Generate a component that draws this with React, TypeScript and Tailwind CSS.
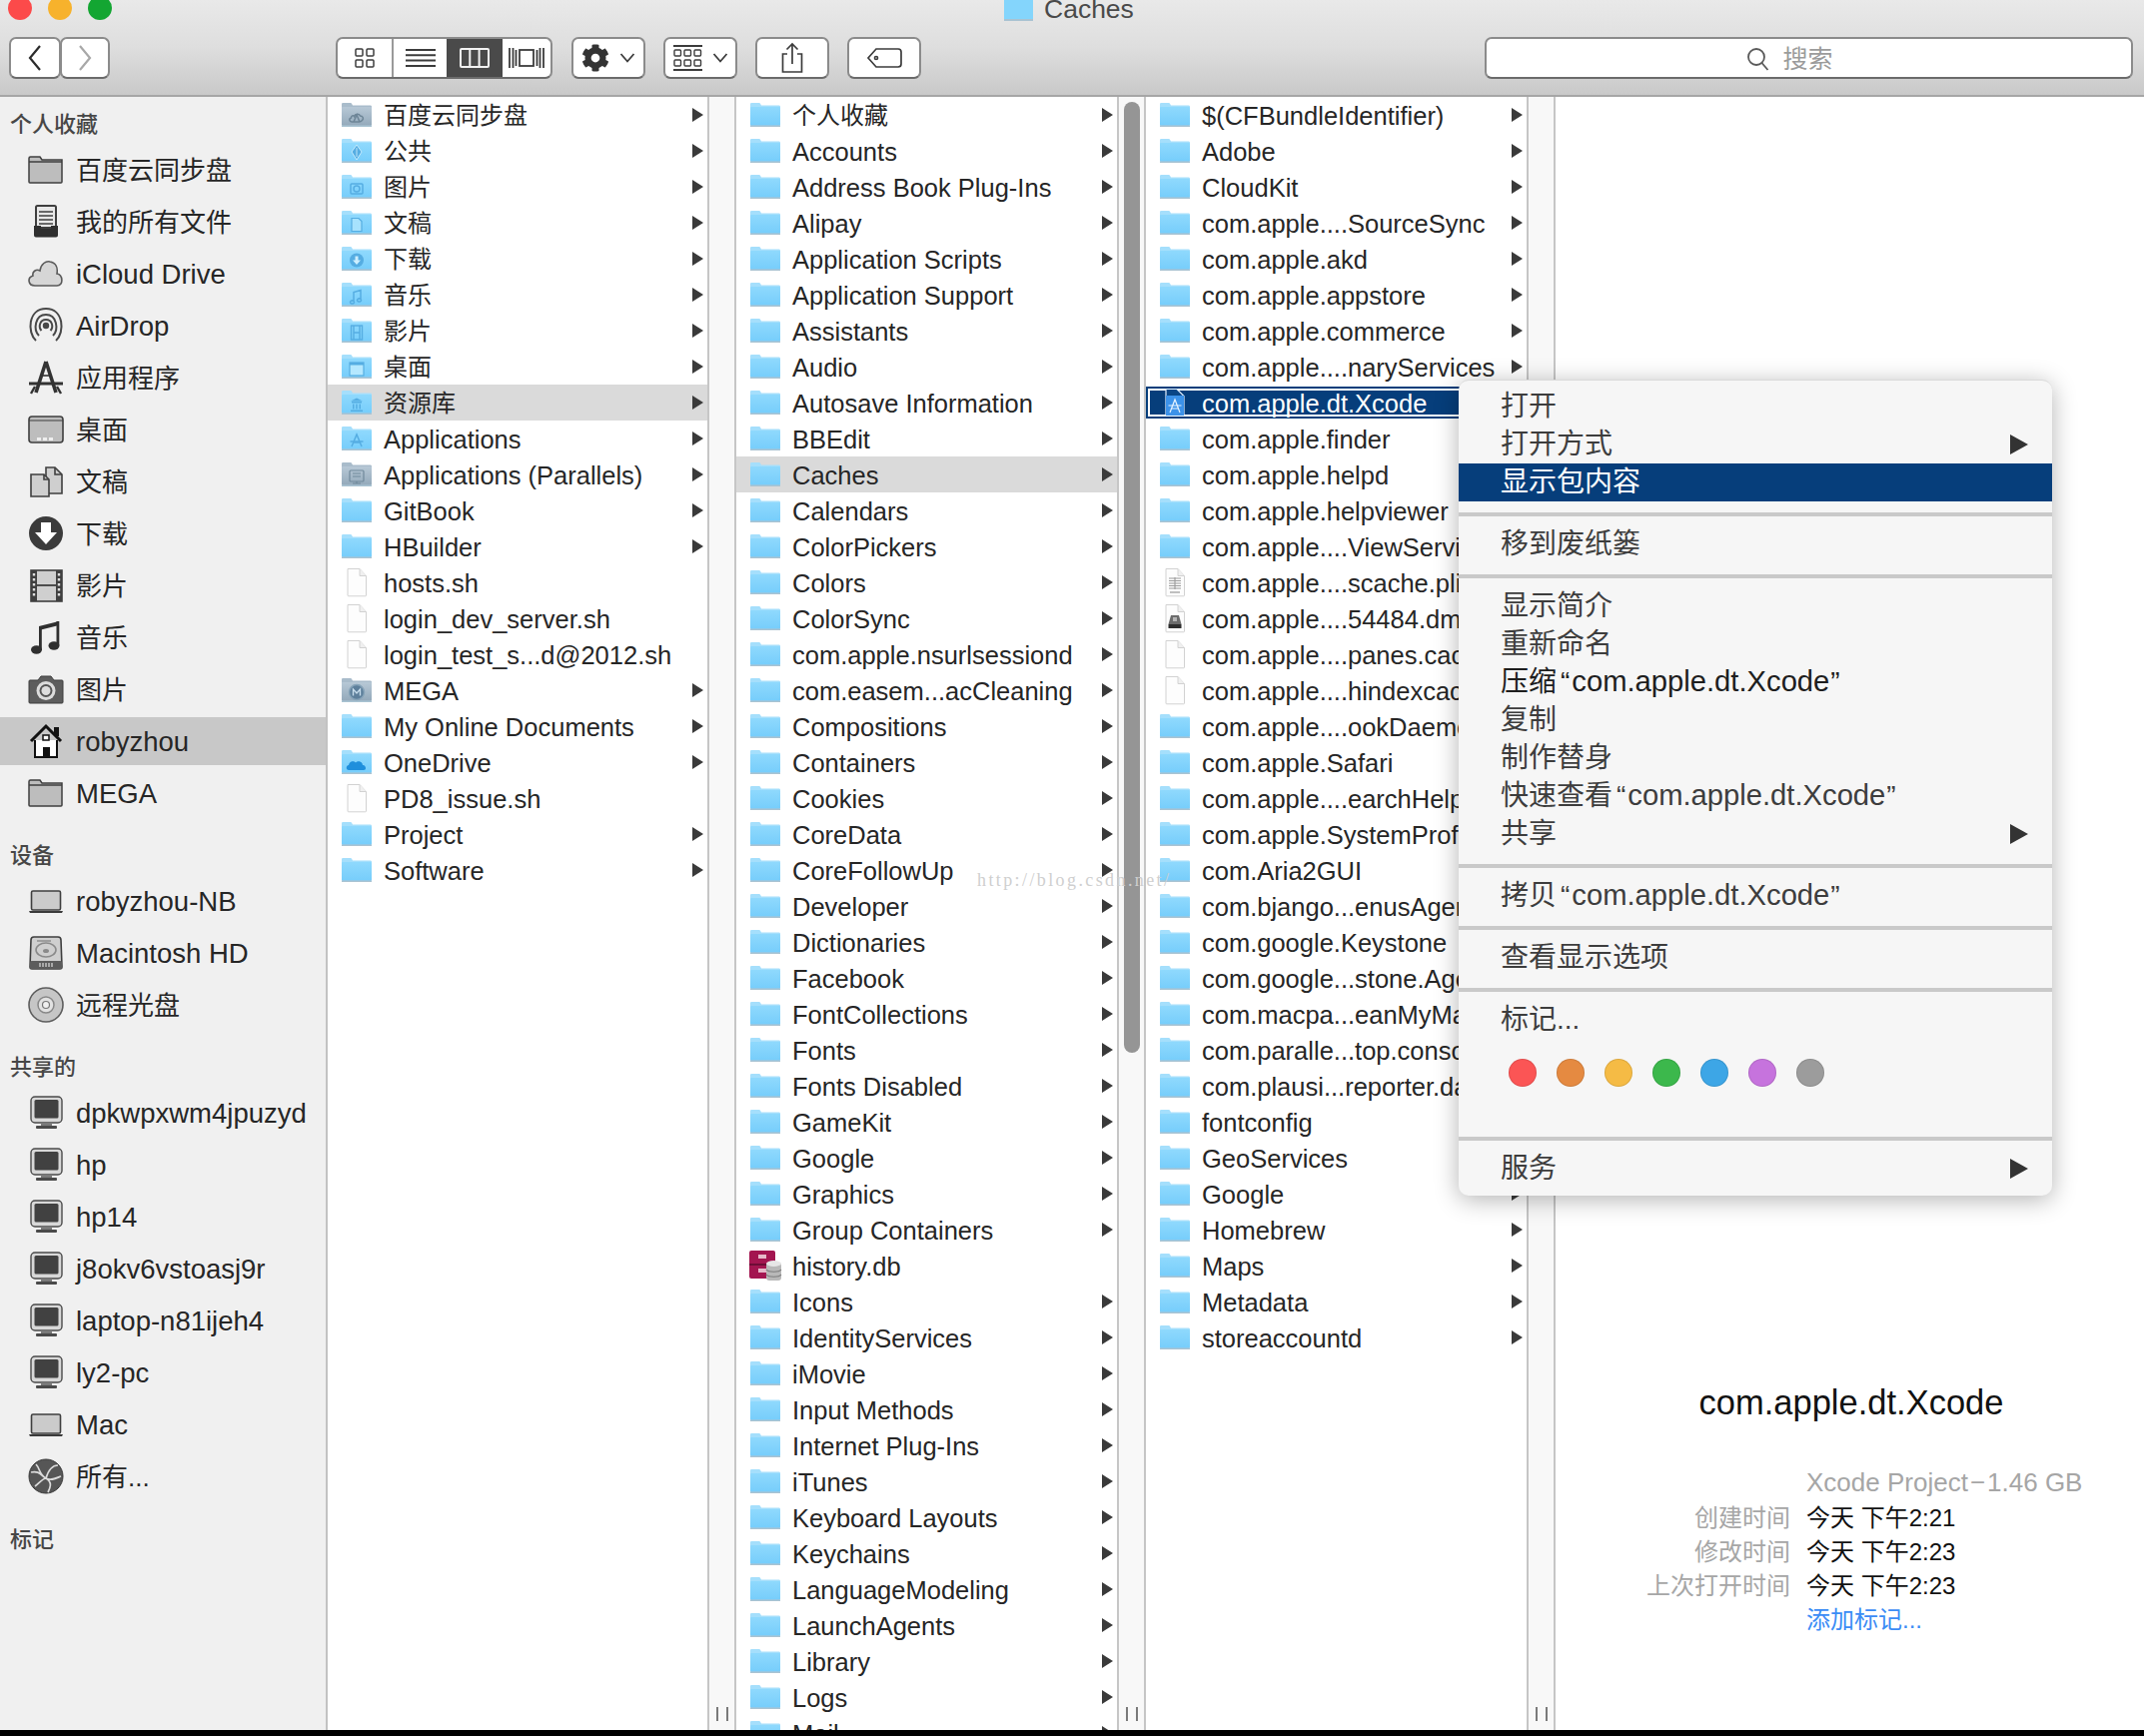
import React from "react";
import { FaCog } from "react-icons/fa";

const isCJK = (s: string) => /[\u4e00-\u9fff]/.test(s);

type Glyph = "cloud" | "star" | "camera" | "doc" | "down" | "music" | "film" | "desk" | "lib" | "app" | "par" | "mega" | "one" | "none";

function Folder({ glyph = "none", tone = "blue" }: { glyph?: Glyph; tone?: "blue" | "grey" }) {
  const back = tone === "grey" ? "#a9bccb" : "#a5dffc";
  const c1 = tone === "grey" ? "#b7c8d6" : "#8fd9fd";
  const c2 = tone === "grey" ? "#93a9ba" : "#76cdfb";
  const g = tone === "grey" ? "#6d8597" : "#55ade2";
  const id = tone === "grey" ? "fg" : "fb";
  return (
    <svg width="32" height="26" viewBox="0 0 32 26" className="shrink-0">
      <defs>
        <linearGradient id={id} x1="0" y1="0" x2="0" y2="1">
          <stop offset="0" stopColor={c1} />
          <stop offset="1" stopColor={c2} />
        </linearGradient>
      </defs>
      <path d="M1 7V2.5C1 1.4 1.6 1 2.5 1H9.5C10.6 1 11 1.6 12 3.5H29.5C30.5 3.5 31 4 31 5V8H1Z" fill={back} />
      <rect x="1" y="5" width="30" height="19" rx="1" fill={`url(#${id})`} />
      <rect x="1" y="23.4" width="30" height="1.6" fill="#a9c3d2" />
      {glyph === "cloud" && <path d="M11 20c-2.5 0-3-3.500-.5-4 0-2 2-3 3-1.500 1-3 5-3 6-.5 2.500 0 4 2.500 2 4.500-1 1-2 1.500-3 1.500zM13 20l3-7 3 7" fill="none" stroke={g} strokeWidth="1.500" />}
      {glyph === "star" && <path d="M16 7l5 7-5 8-5-8z M16 10v9" fill={g} stroke="#d6f2ff" strokeWidth="0.8" />}
      {glyph === "camera" && <g fill="none" stroke={g} strokeWidth="1.500"><rect x="10" y="10" width="12" height="10" rx="1" /><circle cx="16" cy="15" r="3" /></g>}
      {glyph === "doc" && <path d="M11 8.500h7l3 3v10h-10z" fill="#a7e2fd" stroke={g} strokeWidth="1.200" />}
      {glyph === "down" && <g><circle cx="16" cy="14.500" r="7" fill={g} /><path d="M14.500 10.500h3v4h2.500l-4 4.500-4-4.500h2.500z" fill="#cdefff" /></g>}
      {glyph === "music" && <path d="M13 19.500v-9l7-2v9M13 19.500a2 1.500 0 1 1-3 0 2 1.500 0 0 1 3 0zM20 17.500a2 1.500 0 1 1-3 0 2 1.500 0 0 1 3 0z" fill="none" stroke={g} strokeWidth="1.500" />}
      {glyph === "film" && <g fill="none" stroke={g} strokeWidth="1.400"><rect x="10.500" y="8" width="11" height="14" /><path d="M13 8v14M19 8v14M13 15h6" /></g>}
      {glyph === "desk" && <g><rect x="9" y="9" width="14" height="13" fill="#b5e8ff" stroke={g} strokeWidth="1.200" /><rect x="9" y="9" width="14" height="2.500" fill={g} /></g>}
      {glyph === "lib" && <path d="M10 20.500h12v1.500H10zM11 12h10v1.500H11zM16 8.500l6 3H10zM12 14.500h1.500v5H12zM15.200 14.500h1.500v5h-1.500zM18.500 14.500H20v5h-1.500z" fill={g} />}
      {glyph === "app" && <path d="M11 21l5-12 5 12M12 17h8M9.500 16h13" fill="none" stroke={g} strokeWidth="1.500" />}
      {glyph === "par" && <g fill="none" stroke="#70899b" strokeWidth="1.200"><rect x="9" y="9" width="14" height="11" rx="1" /><path d="M12 22h8M16 20v2M12 12h8M12 15h8" /></g>}
      {glyph === "mega" && <g><circle cx="16" cy="15" r="7.500" fill="#5d7f9b" stroke="#86a3b8" strokeWidth="1.500" /><path d="M12.500 18.500v-6.500l3.500 4 3.500-4v6.500" fill="none" stroke="#c6dbea" strokeWidth="1.400" /></g>}
      {glyph === "one" && <path d="M8 21c-3 0-3-4.500 0-5 .5-4 5-5 7-2.500 2.500-2.500 7-.5 7 2.500 3-.5 4.500 5 1 5z" fill="#1f8fdc" />}
    </svg>
  );
}

function FileIcon({ kind = "blank" }: { kind?: "blank" | "plist" | "dmg" }) {
  return (
    <svg width="24" height="30" viewBox="0 0 24 30" className="shrink-0">
      <path d="M3 1.500h12l6.500 7V28a.8.8 0 0 1-.8.8H3.800A.8.8 0 0 1 3 28z" fill="#fdfdfd" stroke="#d2d2d2" strokeWidth="1" />
      <path d="M15 1.500v7h6.500" fill="#f0f0f0" stroke="#d2d2d2" strokeWidth="1" />
      {kind === "plist" && (
        <g stroke="#9a9a9a" strokeWidth="1.100">
          <path d="M6 11h12M6 13.500h12M6 16h12M6 18.500h12M6 21h12M12 10v12" />
        </g>
      )}
      {kind === "plist" && <rect x="7" y="24" width="10" height="2" fill="#c0c0c0" />}
      {kind === "dmg" && (
        <g>
          <path d="M8 12h8l2.500 9h-13z" fill="#6c6c6c" />
          <rect x="5.500" y="21" width="13" height="4" fill="#2e2e2e" />
          <rect x="10" y="14" width="4" height="4" fill="#b5b5b5" />
        </g>
      )}
    </svg>
  );
}

function DbIcon() {
  return (
    <svg width="34" height="32" viewBox="0 0 34 32" className="shrink-0">
      <rect x="1" y="1" width="26" height="28" rx="2" fill="#a31550" />
      <rect x="1" y="14" width="26" height="2" fill="#6d0d36" />
      <rect x="10" y="5" width="8" height="4" fill="#e6b8c9" />
      <rect x="10" y="19" width="8" height="4" fill="#e6b8c9" />
      <rect x="18" y="13" width="15" height="18" rx="3" fill="#b8b8b8" />
      <ellipse cx="25.500" cy="14" rx="7.500" ry="3" fill="#e6e6e6" />
      <path d="M18 20c2 3 13 3 15 0M18 25c2 3 13 3 15 0" fill="none" stroke="#7d7d7d" strokeWidth="1.200" />
    </svg>
  );
}

function XcodeDoc() {
  return (
    <svg width="24" height="30" viewBox="0 0 24 30" className="shrink-0">
      <path d="M3 1.500h11l7 7V28H3z" fill="#0a4686" stroke="#e3f0ff" strokeWidth="1.200" />
      <rect x="3" y="8" width="18" height="20" fill="#3c92e9" />
      <path d="M7 25l5-13 5 13M8 21h8M5.500 18h13" fill="none" stroke="#e8f4ff" strokeWidth="1.200" />
    </svg>
  );
}

function Arrow({ className = "" }: { className?: string }) {
  return (
    <svg width="11" height="14" viewBox="0 0 11 14" className={`shrink-0 ${className}`}>
      <path d="M0 0L11 7L0 14Z" fill="#3a3a3a" />
    </svg>
  );
}

type Row = { t: string; g?: Glyph; tone?: "grey"; f?: "blank" | "plist" | "dmg" | "db" | "xcode"; noArrow?: boolean };

const col1: Row[] = [
  { t: "百度云同步盘", g: "cloud", tone: "grey" },
  { t: "公共", g: "star" },
  { t: "图片", g: "camera" },
  { t: "文稿", g: "doc" },
  { t: "下载", g: "down" },
  { t: "音乐", g: "music" },
  { t: "影片", g: "film" },
  { t: "桌面", g: "desk" },
  { t: "资源库", g: "lib" },
  { t: "Applications", g: "app" },
  { t: "Applications (Parallels)", g: "par", tone: "grey" },
  { t: "GitBook" },
  { t: "HBuilder" },
  { t: "hosts.sh", f: "blank", noArrow: true },
  { t: "login_dev_server.sh", f: "blank", noArrow: true },
  { t: "login_test_s...d@2012.sh", f: "blank", noArrow: true },
  { t: "MEGA", g: "mega", tone: "grey" },
  { t: "My Online Documents" },
  { t: "OneDrive", g: "one" },
  { t: "PD8_issue.sh", f: "blank", noArrow: true },
  { t: "Project" },
  { t: "Software" },
];

const col2: Row[] = [
  "个人收藏", "Accounts", "Address Book Plug-Ins", "Alipay", "Application Scripts", "Application Support", "Assistants", "Audio",
  "Autosave Information", "BBEdit", "Caches", "Calendars", "ColorPickers", "Colors", "ColorSync", "com.apple.nsurlsessiond",
  "com.easem...acCleaning", "Compositions", "Containers", "Cookies", "CoreData", "CoreFollowUp", "Developer", "Dictionaries",
  "Facebook", "FontCollections", "Fonts", "Fonts Disabled", "GameKit", "Google", "Graphics", "Group Containers", "history.db",
  "Icons", "IdentityServices", "iMovie", "Input Methods", "Internet Plug-Ins", "iTunes", "Keyboard Layouts", "Keychains",
  "LanguageModeling", "LaunchAgents", "Library", "Logs", "Mail",
].map((t): Row => (t === "history.db" ? { t, f: "db", noArrow: true } : { t }));

const col3: Row[] = [
  { t: "$(CFBundleIdentifier)" },
  { t: "Adobe" },
  { t: "CloudKit" },
  { t: "com.apple....SourceSync" },
  { t: "com.apple.akd" },
  { t: "com.apple.appstore" },
  { t: "com.apple.commerce" },
  { t: "com.apple....naryServices" },
  { t: "com.apple.dt.Xcode", f: "xcode" },
  { t: "com.apple.finder" },
  { t: "com.apple.helpd" },
  { t: "com.apple.helpviewer" },
  { t: "com.apple....ViewServices" },
  { t: "com.apple....scache.plist", f: "plist", noArrow: true },
  { t: "com.apple....54484.dmg", f: "dmg", noArrow: true },
  { t: "com.apple....panes.cache", f: "blank", noArrow: true },
  { t: "com.apple....hindexcache", f: "blank", noArrow: true },
  { t: "com.apple....ookDaemon" },
  { t: "com.apple.Safari" },
  { t: "com.apple....earchHelper" },
  { t: "com.apple.SystemProfiler" },
  { t: "com.Aria2GUI" },
  { t: "com.bjango...enusAgent" },
  { t: "com.google.Keystone" },
  { t: "com.google...stone.Agent" },
  { t: "com.macpa...eanMyMac" },
  { t: "com.paralle...top.console" },
  { t: "com.plausi...reporter.data" },
  { t: "fontconfig" },
  { t: "GeoServices" },
  { t: "Google" },
  { t: "Homebrew" },
  { t: "Maps" },
  { t: "Metadata" },
  { t: "storeaccountd" },
];

function RowIcon({ r }: { r: Row }) {
  if (r.f === "db") return <DbIcon />;
  if (r.f === "xcode") return <XcodeDoc />;
  if (r.f) return <FileIcon kind={r.f} />;
  return <Folder glyph={r.g} tone={r.tone ?? "blue"} />;
}

function ColumnRow({ r, selected }: { r: Row; selected?: "grey" | "navy" }) {
  const size = isCJK(r.t) ? "text-[24px]" : "text-[25.5px]";
  const navy = selected === "navy";
  const inner = (
    <>
      <div className={`w-[32px] flex justify-center items-center shrink-0 ${navy ? "ml-[9px]" : "ml-[13px]"}`}>
        <RowIcon r={r} />
      </div>
      <span className={`ml-[11px] pt-[2px] whitespace-nowrap ${size} ${navy ? "text-white" : "text-[#262626]"}`}>{r.t}</span>
      {!r.noArrow && <Arrow className="ml-auto mr-[4px]" />}
    </>
  );
  if (navy) {
    return (
      <div className="h-9 py-[2px] flex">
        <div className="flex-1 border-2 border-[#063e7b] bg-white p-[2px] flex">
          <div className="flex-1 flex items-center bg-[#063e7b]">{inner}</div>
        </div>
      </div>
    );
  }
  return <div className={`h-9 flex items-center ${selected === "grey" ? "bg-[#dadada]" : ""}`}>{inner}</div>;
}

function Gutter({ thumb, w }: { thumb?: boolean; w: string }) {
  return (
    <div className={`${w} shrink-0 bg-[#f8f8f8] border-x-2 border-[#c6c6c6] flex flex-col items-center`}>
      {thumb && <div className="w-[16px] h-[952px] mt-[5px] rounded-full bg-[#959595]" />}
      <div className="mt-auto mb-[9px] flex gap-[8px]">
        <div className="w-[2px] h-[14px] bg-[#7a7a7a]" />
        <div className="w-[2px] h-[14px] bg-[#7a7a7a]" />
      </div>
    </div>
  );
}

function Column({ rows, sel, selKind, w }: { rows: Row[]; sel: number; selKind: "grey" | "navy"; w: string }) {
  return (
    <div className={`${w} shrink-0 overflow-hidden bg-white`}>
      {rows.map((r, i) => (
        <ColumnRow key={r.t + i} r={r} selected={i === sel ? selKind : undefined} />
      ))}
    </div>
  );
}

type SK = "folder" | "files" | "cloud" | "airdrop" | "apps" | "desktop" | "docs" | "down" | "film" | "music" | "camera" | "home" | "laptop" | "hd" | "disc" | "monitor" | "globe";

function SIcon({ k }: { k: SK }) {
  const s = "#3f3f3f";
  return (
    <svg width="36" height="36" viewBox="0 0 36 36" className="shrink-0">
      {k === "folder" && (
        <g stroke={s} strokeWidth="1.500">
          <path d="M1 8V6.500C1 5.500 1.500 5 2.500 5H12l2 3h20v22a1 1 0 0 1-1 1H2a1 1 0 0 1-1-1z" fill="#bdbdbd" />
          <path d="M1 10h33" fill="none" />
        </g>
      )}
      {k === "files" && (
        <g>
          <path d="M8 3.500Q8 2 9.500 2h17Q28 2 28 3.500V24H8z" fill="#e8e8e8" stroke={s} strokeWidth="2" />
          <path d="M11 8h14M11 12h14M11 16h14M11 20h14" stroke={s} strokeWidth="1.600" />
          <path d="M6 22h7v3h10v-3h7v9.500q0 2-2 2H8q-2 0-2-2z" fill="#2f2f2f" />
        </g>
      )}
      {k === "cloud" && <path d="M7 30c-7 0-8-8-2-10-1-4 3-7 7-5 1-7 6-10 10-9 6 1 8 6 7 12 6 1 7 12 0 12z" fill="#d6d6d6" stroke="#5a5a5a" strokeWidth="1.600" />}
      {k === "airdrop" && (
        <g fill="none" stroke="#484848" strokeWidth="2">
          <path d="M8 33C-1 25 0 1 18 1s19 24 10 32" />
          <path d="M11 28C5 22 7 7 18 7s13 15 7 21" />
          <path d="M13.500 23C10 19 12 12 18 12s8 7 4.500 11" />
          <circle cx="18" cy="18" r="2.200" fill="#484848" />
        </g>
      )}
      {k === "apps" && (
        <g>
          <path d="M18 2L8 33M18 2l10 31" fill="none" stroke="#333" strokeWidth="3.600" />
          <path d="M1 24h34" stroke="#333" strokeWidth="3" />
          <path d="M12 16h12" stroke="#333" strokeWidth="1.600" />
          <path d="M3 34l4-7M33 34l-4-7" stroke="#333" strokeWidth="2.400" />
        </g>
      )}
      {k === "desktop" && (
        <g>
          <rect x="1" y="5" width="34" height="26" rx="3" fill="#bdbdbd" stroke={s} strokeWidth="1.600" />
          <path d="M1 9h34" stroke={s} strokeWidth="1.200" />
          <rect x="9" y="26" width="4" height="3" fill="#eee" />
          <rect x="15" y="26" width="4" height="3" fill="#eee" />
          <rect x="21" y="26" width="4" height="3" fill="#eee" />
        </g>
      )}
      {k === "docs" && (
        <g fill="#cfcfcf" stroke={s} strokeWidth="1.600">
          <path d="M18 4h9l7 7v19H18z" />
          <path d="M3 11h13l5 5v17H3z" />
          <path d="M16 11v5h5M27 4v7h7" fill="none" />
        </g>
      )}
      {k === "down" && (
        <g>
          <circle cx="18" cy="18" r="17" fill="#3b3b3b" />
          <path d="M13 7h10v10h6L18 29 7 17h6z" fill="#fff" />
        </g>
      )}
      {k === "film" && (
        <g>
          <rect x="3" y="3" width="31" height="31" fill="#cfcfcf" stroke={s} strokeWidth="1.600" />
          <rect x="3" y="3" width="6" height="31" fill={s} />
          <rect x="28" y="3" width="6" height="31" fill={s} />
          <path d="M9 18h19" stroke={s} strokeWidth="1.800" />
          <path d="M6 6v25M31 6v25" stroke="#ddd" strokeWidth="2.400" strokeDasharray="2.500 2.500" />
        </g>
      )}
      {k === "music" && (
        <g fill="#2f2f2f">
          <path d="M11 7L31 2v4L11 11z" />
          <rect x="11" y="7" width="2.800" height="24" />
          <rect x="28.500" y="2" width="2.800" height="24" />
          <ellipse cx="8.500" cy="30.500" rx="5.500" ry="4.200" />
          <ellipse cx="26" cy="26.500" rx="5.500" ry="4.200" />
        </g>
      )}
      {k === "camera" && (
        <g>
          <path d="M2 9h8l3-4h10l3 4h8a1 1 0 0 1 1 1v21a1 1 0 0 1-1 1H2a1 1 0 0 1-1-1V10a1 1 0 0 1 1-1z" fill="#5d5d5d" stroke={s} strokeWidth="1" />
          <circle cx="18" cy="19.500" r="9.500" fill="#dcdcdc" />
          <circle cx="18" cy="19.500" r="6.500" fill="#555" />
          <circle cx="18" cy="19.500" r="4.500" fill="#ddd" />
        </g>
      )}
      {k === "home" && (
        <g>
          <path d="M3 18L18 3l15 15" fill="none" stroke="#111" strokeWidth="3" />
          <rect x="26" y="4" width="5" height="9" fill="#111" />
          <path d="M7 17v17h22V17" fill="#fff" stroke="#111" strokeWidth="2" />
          <rect x="15" y="12" width="6" height="5" fill="#fff" stroke="#111" strokeWidth="1.500" />
          <rect x="15" y="24" width="7" height="10" fill="#111" />
        </g>
      )}
      {k === "laptop" && (
        <g>
          <rect x="3.500" y="8" width="29" height="19" rx="1.500" fill="#cbcbcb" stroke={s} strokeWidth="1.600" />
          <path d="M1 28h34l-1 2H2z" fill="#3a3a3a" />
        </g>
      )}
      {k === "hd" && (
        <g>
          <path d="M6 2h24q3 0 3 3l1 27q0 2-2 2H4q-2 0-2-2L3 5q0-3 3-3z" fill="#cfcfcf" stroke={s} strokeWidth="1.600" />
          <rect x="2" y="26" width="32" height="8" rx="1.500" fill="#5c5c5c" />
          <path d="M12 28v4M15 28v4M18 28v4M21 28v4M24 28v4" stroke="#ddd" strokeWidth="1.200" />
          <ellipse cx="18" cy="15" rx="10" ry="7" fill="none" stroke="#8a8a8a" strokeWidth="1.600" />
          <ellipse cx="18" cy="16" rx="3" ry="2" fill="#8a8a8a" />
          <path d="M9 6h14" stroke="#8a8a8a" strokeWidth="1.400" />
        </g>
      )}
      {k === "disc" && (
        <g>
          <circle cx="18" cy="18" r="17" fill="#c6c6c6" stroke="#5d5d5d" strokeWidth="1.600" />
          <circle cx="18" cy="18" r="8" fill="#e2e2e2" stroke="#888" strokeWidth="1.500" />
          <circle cx="18" cy="18" r="3.500" fill="#f0f0f0" stroke="#777" strokeWidth="1.200" />
        </g>
      )}
      {k === "monitor" && (
        <g>
          <rect x="3" y="2" width="31" height="26" rx="4" fill="#d8d8d8" stroke="#4a4a4a" strokeWidth="1.400" />
          <rect x="6.500" y="5" width="24" height="18.500" rx="1.500" fill="#414141" />
          <rect x="13" y="28" width="11" height="3" fill="#7a7a7a" />
          <rect x="8" y="31" width="21" height="3" rx="1" fill="#4a4a4a" />
        </g>
      )}
      {k === "globe" && (
        <g>
          <circle cx="18" cy="18" r="17" fill="#565656" stroke="#3a3a3a" />
          <path d="M3 14c8-2 10 3 15 6s10 0 15-2M8 6c4 4 3 10 10 14s4 10 2 14M30 7c-5 0-9 3-12 13M7 28c4-3 8-8 11-8" fill="none" stroke="#dcdcdc" strokeWidth="1.700" />
        </g>
      )}
    </svg>
  );
}

function SideRow({ k, t, active }: { k: SK; t: string; active?: boolean }) {
  return (
    <div className="h-[52px] flex items-center">
      <div className={`h-12 w-full flex items-center ${active ? "bg-[#c8c8c8]" : ""}`}>
        <div className="ml-[28px] w-[36px] flex justify-center shrink-0">
          <SIcon k={k} />
        </div>
        <span className={`ml-[12px] pt-[2px] whitespace-nowrap text-[#262626] ${isCJK(t) ? "text-[26px]" : "text-[27.5px]"}`}>{t}</span>
      </div>
    </div>
  );
}

function SideHead({ t, first, mt20 }: { t: string; first?: boolean; mt20?: boolean }) {
  return (
    <div className={`h-8 mb-[5px] pl-[10px] pt-[2px] flex items-center text-[22px] font-medium text-[#474747] ${first ? "" : mt20 ? "mt-5" : "mt-[19px]"}`}>{t}</div>
  );
}

function Sidebar() {
  const fav: [SK, string][] = [
    ["folder", "百度云同步盘"],
    ["files", "我的所有文件"],
    ["cloud", "iCloud Drive"],
    ["airdrop", "AirDrop"],
    ["apps", "应用程序"],
    ["desktop", "桌面"],
    ["docs", "文稿"],
    ["down", "下载"],
    ["film", "影片"],
    ["music", "音乐"],
    ["camera", "图片"],
    ["home", "robyzhou"],
    ["folder", "MEGA"],
  ];
  const dev: [SK, string][] = [
    ["laptop", "robyzhou-NB"],
    ["hd", "Macintosh HD"],
    ["disc", "远程光盘"],
  ];
  const share: [SK, string][] = [
    ["monitor", "dpkwpxwm4jpuzyd"],
    ["monitor", "hp"],
    ["monitor", "hp14"],
    ["monitor", "j8okv6vstoasj9r"],
    ["monitor", "laptop-n81ijeh4"],
    ["monitor", "ly2-pc"],
    ["laptop", "Mac"],
    ["globe", "所有..."],
  ];
  return (
    <div className="w-[328px] shrink-0 bg-[#f0f0f0] border-r-2 border-[#c2c2c2] pt-[10px] overflow-hidden">
      <SideHead t="个人收藏" first />
      {fav.map(([k, t]) => (
        <SideRow key={t + k} k={k} t={t} active={t === "robyzhou"} />
      ))}
      <SideHead t="设备" />
      {dev.map(([k, t]) => (
        <SideRow key={t} k={k} t={t} />
      ))}
      <SideHead t="共享的" />
      {share.map(([k, t]) => (
        <SideRow key={t} k={k} t={t} />
      ))}
      <SideHead t="标记" mt20 />
    </div>
  );
}

function Chevron() {
  return (
    <svg width="16" height="10" viewBox="0 0 16 10" className="shrink-0">
      <path d="M1.500 1L8 8.500L14.500 1" fill="none" stroke="#3c3c3c" strokeWidth="1.800" />
    </svg>
  );
}

const btn = "h-[42px] bg-white border-2 border-[#8b8b8b] border-b-[#6b6b6b] rounded-[7px] flex items-center justify-center shrink-0";

function Toolbar() {
  const line = "#3c3c3c";
  return (
    <div className="h-[97px] shrink-0 border-b-2 border-[#a6a6a6] bg-gradient-to-b from-[#e9e9e9] via-[#dedede] to-[#c9c9c9] flex flex-col">
      <div className="h-[21px] flex items-end overflow-hidden relative shrink-0">
        <div className="flex gap-4 ml-2 mb-[1px]">
          <div className="w-6 h-6 rounded-full bg-[#fc4a4a]" />
          <div className="w-6 h-6 rounded-full bg-[#f7b22c]" />
          <div className="w-6 h-6 rounded-full bg-[#13a632]" />
        </div>
        <div className="flex items-end ml-[893px]">
          <div className="w-[29px] h-[21px] bg-[#84d5fc] border-b-2 border-[#a9c3d2]" />
          <span className="ml-[11px] text-[26.500px] leading-[24px] text-[#4a4a4a]">Caches</span>
        </div>
      </div>
      <div className="flex mt-[16px] ml-[9px]">
        <div className={`${btn} w-[52px]`}>
          <svg width="16" height="30" viewBox="0 0 16 30">
            <path d="M13 3L3 15l10 12" fill="none" stroke="#2c2c2c" strokeWidth="2.200" />
          </svg>
        </div>
        <div className={`${btn} w-[50px] -ml-[1px]`}>
          <svg width="16" height="30" viewBox="0 0 16 30">
            <path d="M3 3l10 12L3 27" fill="none" stroke="#a8a8a8" strokeWidth="2.200" />
          </svg>
        </div>
        <div className={`${btn} w-[217px] ml-[226px] overflow-hidden justify-start`}>
          <div className="w-[56px] h-full flex items-center justify-center border-r-2 border-[#9a9a9a]">
            <svg width="20" height="20" viewBox="0 0 20 20" fill="none" stroke={line} strokeWidth="1.500">
              <rect x="1" y="1" width="7" height="7" rx="1" />
              <rect x="12" y="1" width="7" height="7" rx="1" />
              <rect x="1" y="12" width="7" height="7" rx="1" />
              <rect x="12" y="12" width="7" height="7" rx="1" />
            </svg>
          </div>
          <div className="w-[53px] h-full flex items-center justify-center">
            <svg width="30" height="20" viewBox="0 0 30 20" stroke={line} strokeWidth="2">
              <path d="M0 2h30M0 7.300h30M0 12.600h30M0 18h30" />
            </svg>
          </div>
          <div className="w-[56px] h-full flex items-center justify-center bg-[#4a4a4a]">
            <svg width="30" height="20" viewBox="0 0 30 20" fill="none" stroke="#f2f2f2" strokeWidth="2">
              <rect x="1" y="1" width="28" height="18" rx="1" />
              <path d="M10.300 1v18M19.600 1v18" />
            </svg>
          </div>
          <div className="flex-1 h-full flex items-center justify-center">
            <svg width="36" height="22" viewBox="0 0 36 22" fill="none" stroke={line} strokeWidth="1.800">
              <rect x="11" y="3" width="14" height="16" />
              <path d="M1 1v20M4.500 1v20M7.500 3v16M28.500 3v16M31.500 1v20M35 1v20" />
            </svg>
          </div>
        </div>
        <div className={`${btn} w-[74px] ml-[19px] gap-[10px]`}>
          <FaCog size={28} color="#333" />
          <Chevron />
        </div>
        <div className={`${btn} w-[74px] ml-[18px] gap-[10px]`}>
          <svg width="29" height="26" viewBox="0 0 29 26" fill="none" stroke={line} strokeWidth="1.400">
            <path d="M0 1h29M0 25h29" strokeWidth="1.800" />
            <rect x="1" y="5" width="6.500" height="6" rx="1" />
            <rect x="11" y="5" width="6.500" height="6" rx="1" />
            <rect x="21" y="5" width="6.500" height="6" rx="1" />
            <rect x="1" y="15" width="6.500" height="6" rx="1" />
            <rect x="11" y="15" width="6.500" height="6" rx="1" />
            <rect x="21" y="15" width="6.500" height="6" rx="1" />
          </svg>
          <Chevron />
        </div>
        <div className={`${btn} w-[74px] ml-[18px]`}>
          <svg width="22" height="32" viewBox="0 0 22 32" fill="none" stroke={line} strokeWidth="1.700">
            <path d="M6 12H1.500v18h19V12H16M11 22V2M5.500 7.500L11 2l5.500 5.500" />
          </svg>
        </div>
        <div className={`${btn} w-[74px] ml-[18px]`}>
          <svg width="36" height="22" viewBox="0 0 36 22" fill="none" stroke={line} strokeWidth="1.700">
            <path d="M10 2h22q3 0 3 3v12q0 3-3 3H10L2 11z" />
            <circle cx="10" cy="11" r="1.500" />
          </svg>
        </div>
        <div className={`${btn} flex-1 ml-auto max-w-[649px] mr-[11px] gap-[12px] pr-[38px]`}>
          <svg width="24" height="24" viewBox="0 0 24 24" fill="none" stroke="#5a5a5a" strokeWidth="1.800" className="mt-[2px]">
            <circle cx="10" cy="10" r="8" />
            <path d="M15.500 16l6 7" />
          </svg>
          <span className="text-[25px] text-[#9b9b9b] pt-[3px]">搜索</span>
        </div>
      </div>
    </div>
  );
}

function Preview() {
  const rows = [
    ["创建时间", "今天 下午2:21"],
    ["修改时间", "今天 下午2:23"],
    ["上次打开时间", "今天 下午2:23"],
  ];
  return (
    <div className="flex-1 bg-white flex flex-col">
      <div className="mt-[1288px] pl-[3px] text-center text-[34.500px] leading-[38px] text-[#111]">com.apple.dt.Xcode</div>
      <div className="mt-[44px] pl-[251px] h-[34px] flex items-center text-[26px] text-[#a6a6a6]">
        Xcode Project<span className="mx-[2px]">−</span>1.46 GB
      </div>
      <div className="mt-[2px]">
        {rows.map(([a, b]) => (
          <div key={a} className="h-[34px] flex items-center text-[24px]">
            <span className="w-[235px] text-right text-[#a6a6a6] shrink-0">{a}</span>
            <span className="ml-[16px] text-[#111]">{b}</span>
          </div>
        ))}
        <div className="pl-[251px] h-[34px] flex items-center text-[24px] text-[#3b8cf5]">添加标记...</div>
      </div>
    </div>
  );
}

function Quoted({ name }: { name: string }) {
  return (
    <>
      <span className="ml-[4px] mr-[2px]">“</span>
      <span className="text-[29.2px]">{name}</span>
      <span className="ml-[1px]">”</span>
    </>
  );
}

function MItem({ children, arrow, active, dark }: { children: React.ReactNode; arrow?: boolean; active?: boolean; dark?: boolean }) {
  return (
    <div className={`h-[38px] pl-[42px] pr-[24px] flex items-center whitespace-nowrap text-[28px] ${active ? "bg-[#063e7b] text-white" : dark ? "text-[#1e1e1e]" : "text-[#3d3d3d]"}`}>
      <span>{children}</span>
      {arrow && (
        <svg width="18" height="20" viewBox="0 0 18 20" className="ml-auto shrink-0">
          <path d="M0 0L18 10L0 20Z" fill="#333" />
        </svg>
      )}
    </div>
  );
}

function MSep({ top = 11 }: { top?: number }) {
  return <div className={`h-[4px] bg-[#c9c9c9] ${top === 11 ? "mt-[11px]" : "mt-[50px]"} mb-[9px]`} />;
}

function ContextMenu() {
  const dots = ["bg-[#fb5555]", "bg-[#e58a41]", "bg-[#f5bb45]", "bg-[#3cb84c]", "bg-[#3da6e6]", "bg-[#c673dd]", "bg-[#9c9c9c]"];
  return (
    <div className="absolute left-[1460px] top-[380px] w-[594px] pt-[7px] pb-[8px] bg-[#f6f6f6] rounded-[10px] shadow-[0_4px_24px_rgba(0,0,0,0.3)] border-t border-[#dadada]">
      <MItem>打开</MItem>
      <MItem arrow>打开方式</MItem>
      <MItem active>显示包内容</MItem>
      <MSep />
      <MItem>移到废纸篓</MItem>
      <MSep />
      <MItem>显示简介</MItem>
      <MItem>重新命名</MItem>
      <MItem dark>
        压缩<Quoted name="com.apple.dt.Xcode" />
      </MItem>
      <MItem>复制</MItem>
      <MItem>制作替身</MItem>
      <MItem>
        快速查看<Quoted name="com.apple.dt.Xcode" />
      </MItem>
      <MItem arrow>共享</MItem>
      <MSep />
      <MItem>
        拷贝<Quoted name="com.apple.dt.Xcode" />
      </MItem>
      <MSep />
      <MItem>查看显示选项</MItem>
      <MSep />
      <MItem>标记...</MItem>
      <div className="flex gap-[20px] pl-[50px] mt-[20px]">
        {dots.map((d) => (
          <div key={d} className={`w-[28px] h-[28px] rounded-full ${d} border border-black/10`} />
        ))}
      </div>
      <MSep top={50} />
      <MItem arrow>服务</MItem>
    </div>
  );
}

export default function App() {
  return (
    <div className="w-[2146px] h-[1738px] relative overflow-hidden bg-black font-['Liberation_Sans','Noto_Sans_CJK_SC',sans-serif]">
      <div className="h-[1732px] flex flex-col overflow-hidden">
        <Toolbar />
        <div className="flex-1 flex min-h-0">
          <Sidebar />
          <Column rows={col1} sel={8} selKind="grey" w="w-[380px]" />
          <Gutter w="w-[29px]" />
          <Column rows={col2} sel={10} selKind="grey" w="w-[381px]" />
          <Gutter w="w-[29px]" thumb />
          <Column rows={col3} sel={8} selKind="navy" w="w-[381px]" />
          <Gutter w="w-[29px]" />
          <Preview />
        </div>
      </div>
      <div className="absolute left-[978px] top-[868px] font-['Liberation_Serif',serif] text-[18px] tracking-[2.4px] text-[#cfcfcf]">http://blog.csdn.net/</div>
      <ContextMenu />
    </div>
  );
}
